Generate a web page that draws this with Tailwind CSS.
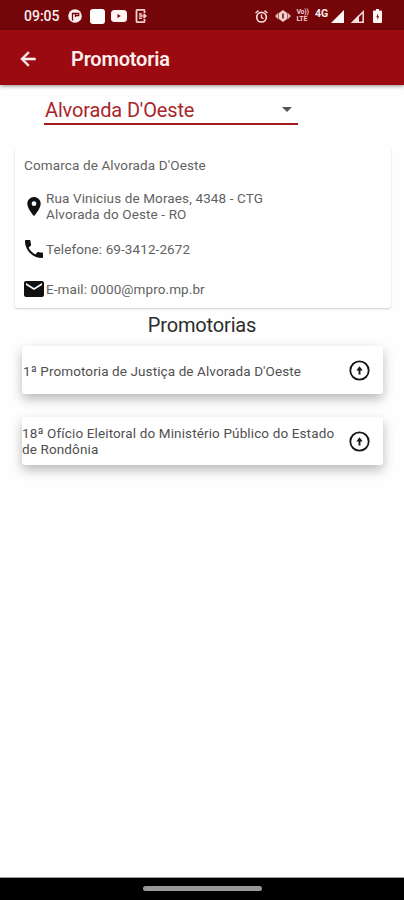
<!DOCTYPE html>
<html lang="pt-BR">
<head>
    <meta charset="UTF-8">
    <meta name="viewport" content="width=device-width, initial-scale=1.0">
    <title>Promotoria</title>
    <script src="https://cdn.jsdelivr.net/npm/@tailwindcss/browser@4"></script>
</head>
<body class="bg-[#fefefe] font-[Roboto,sans-serif]">
    <div class="flex flex-col w-full h-[900px] overflow-hidden">

        <!-- status bar -->
        <div class="flex items-center h-[30px] shrink-0 bg-[#74060a] pl-6 pr-[22px] pt-0.5 text-[#fbeeee]">
            <span class="w-[37px] text-sm font-medium">09:05</span>
            <svg class="w-3.5 h-3.5 ml-[7px]" viewBox="0 0 14 14"><circle cx="7" cy="7" r="6.8" fill="#fbeeee"/><path d="M4.500 11.500V4.500h3v3.500M7.500 4.500h3.200v2.200H8" fill="none" stroke="#74060a" stroke-width="1.300"/></svg>
            <div class="w-[15px] h-[15px] ml-[7.5px] rounded-[3px] bg-white"></div>
            <svg class="w-4 h-3 ml-[6.5px]" viewBox="0 0 16 12"><rect width="16" height="12" rx="3.5" fill="#fff5f5"/><path d="M6.500 4v4l3.300-2z" fill="#74060a"/></svg>
            <svg class="w-3 h-3.5 ml-2" viewBox="0 0 12 14" fill="none" stroke="#f5cfcf"><path d="M9.500 4V1.800a1 1 0 0 0-1-1h-6a1 1 0 0 0-1 1v10.400a1 1 0 0 0 1 1h6a1 1 0 0 0 1-1V10" stroke-width="1.800"/><path d="M4 5h3M4 7h6.500M8.500 4.700 11 7 8.500 9.300M4 9.300h3" stroke-width="1.500"/></svg>
            <div class="grow"></div>
            <svg class="w-[13px] h-[13px]" viewBox="0 0 13 13" fill="none" stroke="#fbdede"><circle cx="6.500" cy="7.200" r="4.800" stroke-width="1.700"/><path d="M.5 3 3.500.6M12.500 3 9.500.6M6.500 4.500v3l2 1.200" stroke-width="1.400"/></svg>
            <svg class="w-4 h-3 ml-[7px]" viewBox="0 0 16 12"><path d="M0 6 3.500 2.500v7zM16 6l-3.500-3.500v7z" fill="#e9b9b9"/><path d="M8 0 4 3v6l4 3 4-3V3z" fill="#f0cfcf"/><path d="M8 3.500v5" stroke="#74060a" stroke-width="1.500"/></svg>
            <div class="flex flex-col w-[15px] ml-[6px] text-[7px] leading-[7px] font-bold text-[#f3cccc]">
                <span class="tracking-[-0.3px]">Vo))</span>
                <span class="tracking-[-0.2px]">LTE</span>
            </div>
            <span class="w-[15px] ml-[3.5px] -mt-1 text-[10.5px] leading-none font-bold">4G</span>
            <svg class="w-[13px] h-[13px] ml-px" viewBox="0 0 13 13"><path d="M13 0v13H0z" fill="#fff5f5"/></svg>
            <svg class="w-[13px] h-[13px] ml-[7px]" viewBox="0 0 13 13"><path d="M12.200 1.800v10.400H1.800z" fill="none" stroke="#fbdede" stroke-width="1.500"/><path d="M8 5v8H0z" fill="#fbdede"/></svg>
            <svg class="w-[9px] h-[14px] ml-[9px]" viewBox="0 0 9 14"><path d="M3 0h3v1.500h2a1 1 0 0 1 1 1V13a1 1 0 0 1-1 1H1a1 1 0 0 1-1-1V2.500a1 1 0 0 1 1-1h2z" fill="#fff5f5"/><path d="M5 4.500 3.300 8.300h1.200V11l1.500-3.800H5z" fill="#74060a"/></svg>
        </div>

        <!-- app bar -->
        <div class="flex items-center h-[55px] shrink-0 bg-[#9b0a10] pl-[17px] pt-0.5 shadow-[0_1px_4px_rgba(0,0,0,0.45)]">
            <svg class="w-[22px] h-[22px]" viewBox="0 0 24 24" fill="#fdeeee" stroke="#fdeeee" stroke-width=".8"><path d="M20 11H7.830l5.590-5.590L12 4l-8 8 8 8 1.410-1.410L7.830 13H20v-2z"/></svg>
            <h1 class="ml-8 text-xl font-semibold tracking-[-0.2px] text-[#fdeeee]">Promotoria</h1>
        </div>

        <div class="flex flex-col grow">
            <div class="flex items-center justify-between w-[254px] h-[40px] ml-11 pt-[11px] pl-px pr-[6px] border-b-2 border-[#a01a20] text-[#a8262b]">
                <span class="text-xl tracking-[-0.15px]">Alvorada D'Oeste</span>
                <svg class="w-2.5 h-[5px]" viewBox="0 0 10 5"><path d="M0 0h10L5 5z" fill="#555"/></svg>
            </div>

            <!-- contact card -->
            <div class="mt-[23px] ml-[15px] mr-[13px] h-[160px] pl-[9px] rounded-[3px] bg-white shadow-[0_1px_2px_rgba(0,0,0,0.2)] text-[13.5px] leading-4 text-[#626262]">
                <p class="pt-[9px] tracking-[0.13px]">Comarca de Alvorada D'Oeste</p>
                <div class="flex items-center mt-[17px]">
                    <svg class="w-5 h-[21px] mr-[2px]" viewBox="2 1 20 22" fill="#111"><path d="M12 2C8.130 2 5 5.130 5 9c0 5.250 7 13 7 13s7-7.750 7-13c0-3.870-3.130-7-7-7zm0 9.500a2.500 2.500 0 1 1 0-5 2.500 2.500 0 0 1 0 5z"/></svg>
                    <p class="tracking-[0.12px]">Rua Vinicius de Moraes, 4348 - CTG<br>Alvorada do Oeste - RO</p>
                </div>
                <div class="flex items-center mt-[15px]">
                    <svg class="w-5 h-6 mr-[2px]" viewBox="2 2 20 20" fill="#111"><path d="M6.620 10.790c1.440 2.830 3.760 5.140 6.590 6.590l2.200-2.200c.27-.27.67-.36 1.020-.24 1.120.37 2.330.57 3.570.57.55 0 1 .45 1 1V20c0 .55-.45 1-1 1-9.390 0-17-7.610-17-17 0-.55.45-1 1-1h3.500c.55 0 1 .45 1 1 0 1.250.2 2.450.57 3.570.11.35.03.74-.25 1.020l-2.200 2.200z"/></svg>
                    <p class="tracking-[0.1px]">Telefone: 69-3412-2672</p>
                </div>
                <div class="flex items-center mt-[16px]">
                    <svg class="w-5 h-6 mr-[2px]" viewBox="2 2 20 20" fill="#111"><path d="M20 4H4c-1.100 0-1.990.9-1.990 2L2 18c0 1.100.9 2 2 2h16c1.100 0 2-.9 2-2V6c0-1.100-.9-2-2-2zm0 4-8 5-8-5V6l8 5 8-5v2z"/></svg>
                    <p class="tracking-[0.1px]">E-mail: 0000@mpro.mp.br</p>
                </div>
            </div>

            <h2 class="mt-1 text-center text-xl leading-[26px] tracking-[-0.15px] text-[#2c2c2c]">Promotorias</h2>

            <!-- list -->
            <div class="flex flex-col gap-[23px] mt-2 ml-[22px] mr-[21px] text-[13.5px] leading-4 text-[#505050]">
                <div class="flex items-center justify-between h-[48px] pr-[13px] rounded-[3px] bg-white shadow-[0_5px_12px_rgba(0,0,0,0.28)]">
                    <p class="pl-px pt-px tracking-[0.1px]">1ª Promotoria de Justiça de Alvorada D'Oeste</p>
                    <svg class="w-[21px] h-[21px]" viewBox="0 0 21 21" fill="none" stroke="#151515"><circle cx="10.500" cy="10.500" r="9.200" stroke-width="1.800"/><path d="M10.500 14.500V8" stroke-width="1.900"/><path d="M10.500 6.300 7.300 10.500h6.400z" fill="#151515" stroke="none"/></svg>
                </div>
                <div class="flex items-center justify-between h-[48px] pr-[13px] rounded-[3px] bg-white shadow-[0_5px_12px_rgba(0,0,0,0.28)]">
                    <p class="tracking-[0.13px]">18ª Ofício Eleitoral do Ministério Público do Estado<br>de Rondônia</p>
                    <svg class="w-[21px] h-[21px]" viewBox="0 0 21 21" fill="none" stroke="#151515"><circle cx="10.500" cy="10.500" r="9.200" stroke-width="1.800"/><path d="M10.500 14.500V8" stroke-width="1.900"/><path d="M10.500 6.300 7.300 10.500h6.400z" fill="#151515" stroke="none"/></svg>
                </div>
            </div>
        </div>

        <!-- navigation bar -->
        <div class="flex justify-center h-[23px] shrink-0 bg-black border-t border-[#999]">
            <div class="w-[119px] h-[5px] mt-2 rounded-full bg-[#989898]"></div>
        </div>
    </div>
</body>
</html>
